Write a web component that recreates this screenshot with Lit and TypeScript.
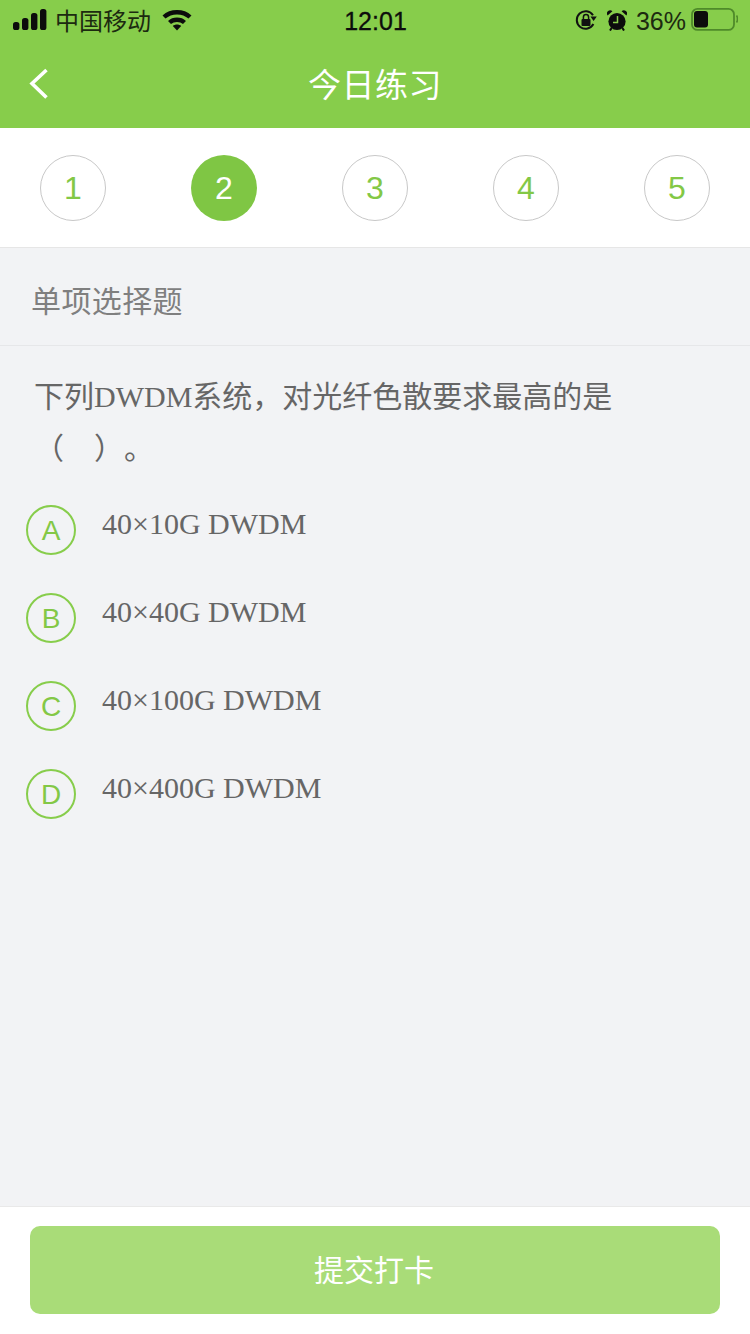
import { LitElement, html, css, svg } from "lit";
import { customElement } from "lit/decorators.js";

@customElement("app-root")
export class AppRoot extends LitElement {
  static styles = css`
    :host { display: block; width: 750px; height: 1334px; font-family: "Liberation Sans", "Noto Sans CJK SC", sans-serif; text-spacing-trim: space-all; }
    .page { width: 750px; height: 1334px; display: flex; flex-direction: column; background: #f2f3f5; overflow: hidden; }
    .head { height: 128px; background: #87cd4b; flex: none; display: flex; flex-direction: column; }
    .status { height: 42px; display: grid; grid-template-columns: 1fr auto 1fr; align-items: center; padding: 0 12px 0 13px; }
    .sl { display: flex; align-items: center; font-size: 24px; color: #1c2a10; }
    .sl svg { margin-bottom: 2px; }
    .carrier { margin: 0 11px 4px 8px; }
    .sr { display: flex; align-items: center; justify-content: flex-end; font-size: 25px; color: #1c2a10; }
    .pct { margin: 0 5px 0 9px; }
    .gap { margin-left: 10px; }
    .lift { display: flex; margin-bottom: 2px; }
    .time { font-size: 25px; color: #0c0c0c; -webkit-text-stroke: 0.3px #0c0c0c; }
    .nav { flex: 1; position: relative; display: flex; align-items: center; justify-content: center; padding-bottom: 5px; }
    .title { color: #fff; font-size: 33px; letter-spacing: 0.5px; }
    .back { position: absolute; left: 28px; top: 26px; }
    .steps { background: #fff; flex: none; display: flex; justify-content: space-between; align-items: center; padding: 1px 40px 0; border-bottom: 1px solid #e6e6e6; box-sizing: border-box; height: 120px; }
    .step { width: 66px; height: 66px; box-sizing: border-box; border: 1px solid #c8c8c8; border-radius: 50%; color: #83c846; font-size: 32px; display: flex; align-items: center; justify-content: center; }
    .step.on { background: #7fc644; border: none; color: #fff; }
    .type { height: 98px; flex: none; box-sizing: border-box; border-bottom: 1px solid #e6e7e9; padding: 4px 0 0 31px; display: flex; align-items: center; font-size: 30px; color: #7f7f7f; letter-spacing: 0.4px; }
    .q { flex: none; padding: 25px 0 0 34px; width: 600px; font-family: "Liberation Serif", "Noto Sans CJK SC", serif; font-size: 30px; line-height: 52px; color: #666; }
    .opts { flex: 1; display: flex; flex-direction: column; gap: 38px; padding: 30px 0 0 26px; }
    .opt { display: flex; height: 50px; align-items: flex-start; }
    .mark { width: 50px; height: 50px; flex: none; box-sizing: border-box; border: 2px solid #87cd4b; border-radius: 50%; color: #83c846; font-size: 28px; display: flex; align-items: center; justify-content: center; padding-top: 2px; }
    .txt { margin: -1px 0 0 26px; font-family: "Liberation Serif", "Noto Sans CJK SC", serif; font-size: 30px; color: #666; line-height: 40px; }
    .foot { height: 128px; flex: none; background: #fff; border-top: 1px solid #e9e9e9; box-sizing: border-box; padding: 19px 30px 20px; }
    .btn { height: 88px; border-radius: 10px; background: #a9dc78; color: #fff; font-size: 30px; display: flex; align-items: center; justify-content: center; padding: 0 2px 4px 0; box-sizing: border-box; }
    svg { display: block; flex: none; }
  `;

  private signal() {
    return svg`<svg width="34" height="22" viewBox="0 0 34 22" fill="#0c0c0c">
      <rect x="0" y="13" width="6.4" height="8" rx="2.6"/><rect x="9" y="9" width="6.4" height="12" rx="2.6"/>
      <rect x="18" y="4" width="6.4" height="17" rx="2.6"/><rect x="27" y="0" width="6.4" height="21" rx="2.6"/></svg>`;
  }
  private wifi() {
    return svg`<svg width="30" height="22" viewBox="0 0 30 22" fill="none" stroke="#0c0c0c" stroke-width="4.4">
      <path d="M2 8 C9 1.6 21 1.6 28 8"/><path d="M7.5 13.5 C11.5 9.8 18.5 9.8 22.5 13.5"/>
      <path d="M10.8 17 L15 21.5 L19.2 17 C17 15 13 15 10.8 17Z" fill="#0c0c0c" stroke="none"/></svg>`;
  }
  private lock() {
    return svg`<svg width="22" height="22" viewBox="0 0 22 22" fill="none" stroke="#111" stroke-width="2">
      <path d="M18.4 15 A8.8 8.8 0 1 1 18 6.2"/><path d="M15.5 7.5 L21.8 7.5 L18.6 12 Z" fill="#111" stroke="none"/>
      <rect x="6.5" y="10" width="9" height="7" rx="1" fill="#111" stroke="none"/><path d="M8.4 10 V8.2 a2.6 2.6 0 0 1 5.2 0 V10" stroke-width="1.5"/></svg>`;
  }
  private alarm() {
    return svg`<svg width="20" height="21" viewBox="0 0 20 21" fill="#0c0c0c">
      <circle cx="10" cy="11.5" r="8.6"/><path d="M0.6 5.4 L5.4 1.2 A3.2 3.2 0 0 0 0.6 5.4Z M19.4 5.4 L14.6 1.2 A3.2 3.2 0 0 1 19.4 5.4Z"/>
      <path d="M4.6 18 L3 20.6 M15.4 18 L17 20.6" stroke="#0c0c0c" stroke-width="2"/>
      <path d="M10.5 6 V12.4 H6" stroke="#87cd4b" stroke-width="1.5" fill="none"/></svg>`;
  }
  private battery() {
    return svg`<svg width="47" height="24" viewBox="0 0 47 24" fill="none">
      <rect x="1" y="0.9" width="42" height="21" rx="5.5" stroke="#4f8a2a" stroke-width="1.8"/>
      <rect x="3" y="3" width="14" height="16.5" rx="3" fill="#0c0c0c"/>
      <path d="M45.5 7.5 C46.8 9 46.8 13 45.5 14.5" stroke="#4f8a2a" stroke-width="1.6"/></svg>`;
  }

  render() {
    const opts = [["A", "40×10G DWDM"], ["B", "40×40G DWDM"], ["C", "40×100G DWDM"], ["D", "40×400G DWDM"]];
    return html`<div class="page">
      <div class="head">
        <div class="status">
          <div class="sl">${this.signal()}<span class="carrier">中国移动</span>${this.wifi()}</div>
          <div class="time">12:01</div>
          <div class="sr"><span class="lift">${this.lock()}</span><span class="gap"></span><span class="lift">${this.alarm()}</span><span class="pct">36%</span><span class="lift">${this.battery()}</span></div>
        </div>
        <div class="nav">
          <svg class="back" width="22" height="32" viewBox="0 0 22 32" fill="none" stroke="#fff" stroke-width="3.6"><path d="M18.5 2 L4 15.5 L18.5 29.5"/></svg>
          <div class="title">今日练习</div>
        </div>
      </div>
      <div class="steps">
        ${[1, 2, 3, 4, 5].map((n) => html`<div class="step ${n === 2 ? "on" : ""}">${n}</div>`)}
      </div>
      <div class="type">单项选择题</div>
      <div class="q">下列DWDM系统，对光纤色散要求最高的是（　）。</div>
      <div class="opts">
        ${opts.map(([k, t]) => html`<div class="opt"><div class="mark">${k}</div><div class="txt">${t}</div></div>`)}
      </div>
      <div class="foot"><div class="btn">提交打卡</div></div>
    </div>`;
  }
}
